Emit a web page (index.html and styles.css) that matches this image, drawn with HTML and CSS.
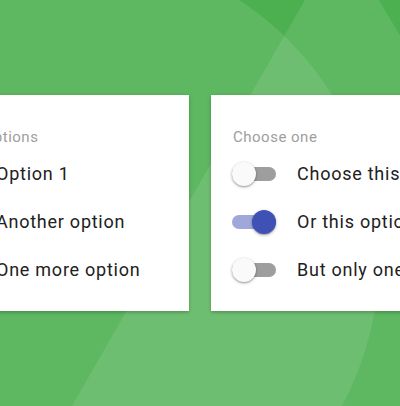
FILE: index.html
```html
<!DOCTYPE html>
<html lang="en">
<head>
<meta charset="utf-8">
<title>Options</title>
<link rel="stylesheet" href="styles.css">
</head>
<body>
<main class="stage">
  <section class="card card-list">
    <div class="label">Options</div>
    <ul class="items">
      <li class="item">Option 1</li>
      <li class="item">Another option</li>
      <li class="item">One more option</li>
    </ul>
  </section>
  <section class="card card-switch">
    <div class="label">Choose one</div>
    <ul class="items">
      <li class="row"><span class="switch"><span class="track"></span><span class="thumb"></span></span><span class="text">Choose this</span></li>
      <li class="row"><span class="switch on"><span class="track"></span><span class="thumb"></span></span><span class="text">Or this option</span></li>
      <li class="row"><span class="switch"><span class="track"></span><span class="thumb"></span></span><span class="text">But only one</span></li>
    </ul>
  </section>
</main>
</body>
</html>
```
FILE: styles.css
```css
html, body {
  margin: 0;
  padding: 0;
}
body {
  width: 400px;
  height: 406px;
  overflow: hidden;
  font-family: Roboto, "Liberation Sans", sans-serif;
  background-color: #4caf50;
  background-image: url("data:image/svg+xml;utf8,<svg xmlns='http://www.w3.org/2000/svg' width='400' height='406' viewBox='0 0 400 406'><circle cx='69' cy='259' r='310' fill='white' fill-opacity='0.1'/><polygon points='341,-63 679,500 18,500' fill='white' fill-opacity='0.1'/></svg>");
  background-repeat: no-repeat;
  background-size: 400px 406px;
}
.stage {
  display: flex;
  justify-content: center;
  gap: 22px;
  padding-top: 95px;
}
.card {
  flex: 0 0 228px;
  width: 228px;
  height: 216px;
  box-sizing: border-box;
  padding: 32px 22px 0;
  background: #fff;
  box-shadow: 0 1px 4px rgba(0, 0, 0, 0.18), 0 2px 2px rgba(0, 0, 0, 0.08);
}
.label {
  height: 20px;
  line-height: 20px;
  font-size: 15px;
  letter-spacing: 0.5px;
  color: #9e9e9e;
  margin-bottom: 3px;
  white-space: nowrap;
}
.items {
  list-style: none;
  margin: 0;
  padding: 0;
}
.item, .row {
  height: 48px;
  line-height: 48px;
  font-size: 18px;
  letter-spacing: 0.75px;
  color: #212121;
  white-space: nowrap;
}
.item {
  padding-left: 13px;
}
.row {
  display: flex;
  align-items: center;
}
.switch {
  display: grid;
  align-items: center;
  width: 44px;
  height: 24px;
  margin-left: -1px;
  margin-right: 21px;
  flex: 0 0 auto;
}
.track {
  grid-area: 1 / 1;
  height: 14px;
  border-radius: 7px;
  background: #9e9e9e;
}
.thumb {
  grid-area: 1 / 1;
  justify-self: start;
  width: 24px;
  height: 24px;
  border-radius: 50%;
  background: #fafafa;
  box-shadow: 0 1px 3px rgba(0, 0, 0, 0.35), 0 1px 1px rgba(0, 0, 0, 0.12);
}
.switch.on .track {
  background: #9fa8da;
}
.switch.on .thumb {
  justify-self: end;
  background: #3f51b5;
}
```
